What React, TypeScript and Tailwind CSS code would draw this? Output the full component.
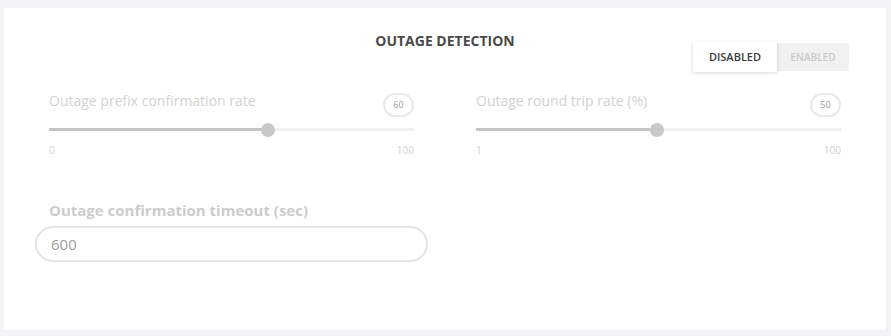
import React from "react";

function Slider({ label, value, min, max }: { label: string; value: number; min: number; max: number }) {
  const pct = ((value - min) / (max - min)) * 100;
  return (
    <div className="flex flex-col">
      <div className="flex h-[26px] items-start justify-between">
        <span className="text-[14px] leading-[20px] text-[#d2d2d2]">{label}</span>
        <span className="mt-[2px] flex h-[24px] w-[31px] items-center justify-center rounded-full border-2 border-[#e9e9e9] text-[9px] text-[#9a9a9a]">
          {value}
        </span>
      </div>
      <div className="relative mt-[6px] h-[14px]">
        <div className="absolute left-0 right-0 top-[5px] h-[3px] bg-[#efefef]" />
        <div className="absolute left-0 top-[5px] h-[3px] bg-[#c6c6c6]" style={{ width: `${pct}%` }} />
        <div
          className="absolute top-0 h-[14px] w-[14px] -translate-x-1/2 rounded-full bg-[#c8c8c8]"
          style={{ left: `${pct}%` }}
        />
      </div>
      <div className="mt-[6px] flex justify-between text-[10px] leading-[14px] text-[#d0d0d0]">
        <span>{min}</span>
        <span>{max}</span>
      </div>
    </div>
  );
}

export default function App() {
  return (
    <div className="min-h-[336px] bg-[#f3f4f6] pl-[4px] pr-[5px] pt-[8px] pb-[6px] font-['Open_Sans',sans-serif]">
      <div className="bg-white px-[45px] pt-[23px] pb-[68px] shadow-[0_0_2px_rgba(0,0,0,0.03)]">
        <div className="grid grid-cols-[1fr_auto_1fr]">
          <div />
          <h2 className="text-[14px] font-bold leading-[20px] text-[#4a4a4a]">OUTAGE DETECTION</h2>
          <div className="flex justify-end">
            <div className="mr-[-8px] mt-[11px] flex h-[30px]">
              <button className="z-10 h-[30px] w-[84px] bg-white text-[11px] font-semibold text-[#3a3a3a] shadow-[0_1px_4px_rgba(0,0,0,0.15)]">
                DISABLED
              </button>
              <button className="mt-[1px] h-[28px] w-[72px] bg-[#f1f1f1] text-[10px] font-semibold text-[#c9c9c9]">
                ENABLED
              </button>
            </div>
          </div>
        </div>
        <div className="mt-[19px] grid grid-cols-2 gap-x-[62px]">
          <Slider label="Outage prefix confirmation rate" value={60} min={0} max={100} />
          <Slider label="Outage round trip rate (%)" value={50} min={1} max={100} />
        </div>
        <div className="mt-[43px] w-[365px]">
          <div className="text-[15px] font-bold leading-[20px] text-[#cccccc]">Outage confirmation timeout (sec)</div>
          <div className="mx-[-14px] mt-[6px] flex h-[36px] items-center rounded-full border-2 border-[#e4e4e4] px-[14px] text-[15px] text-[#a0a0a0]">
            600
          </div>
        </div>
      </div>
    </div>
  );
}
